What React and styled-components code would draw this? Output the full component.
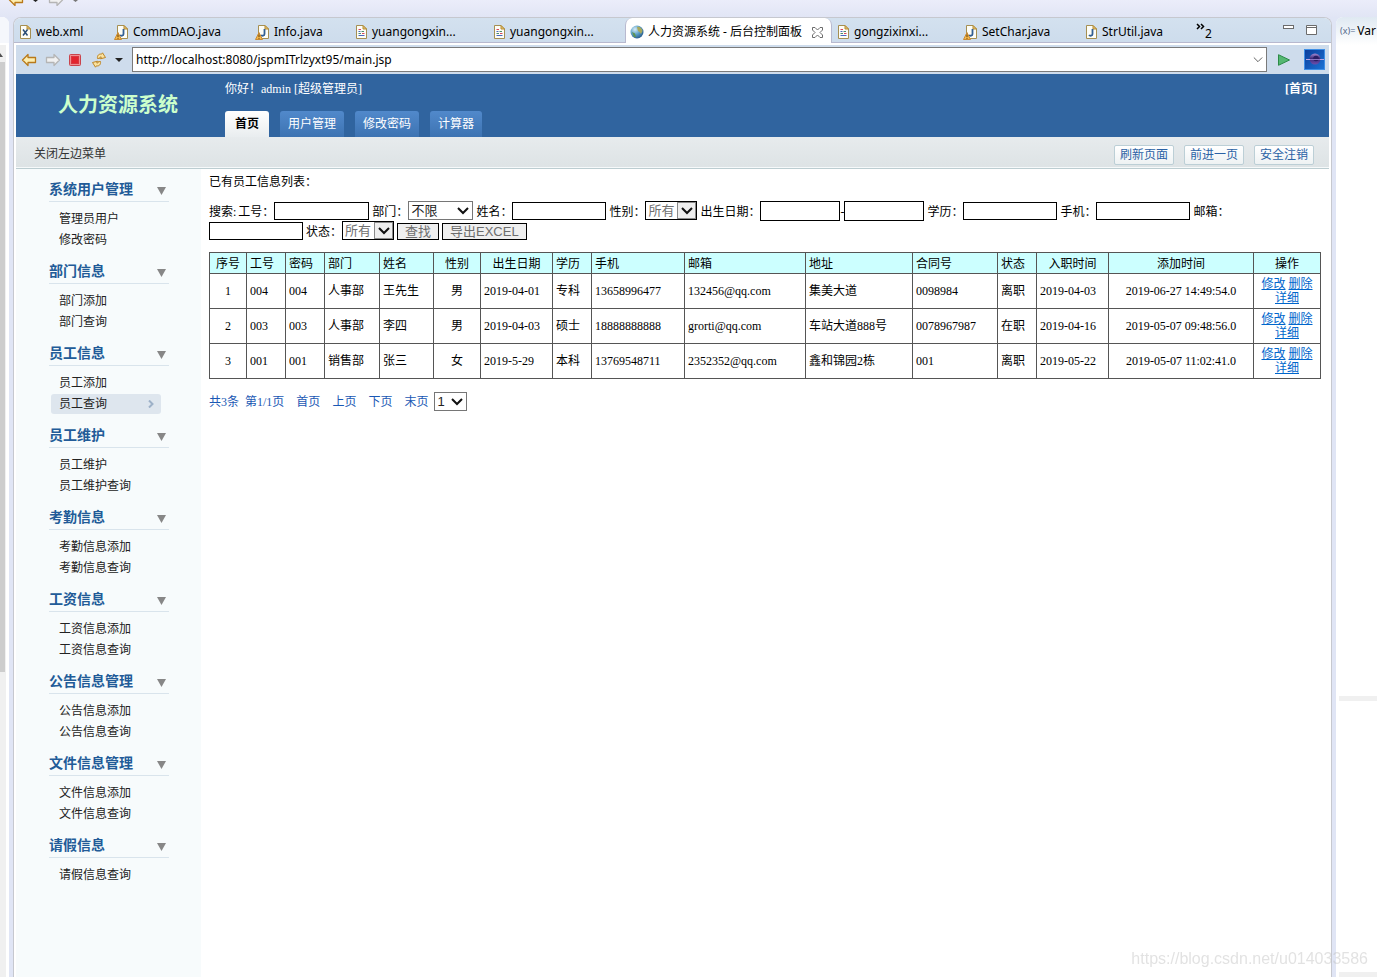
import React, { useState } from 'react';
import styled, { createGlobalStyle, css } from 'styled-components';

const uiFont = '"Noto Sans", "Noto Sans CJK SC", sans-serif';
const pageFont = '"Liberation Serif", "Noto Sans CJK SC", serif';
const formFont = '"Liberation Sans", "Noto Sans CJK SC", sans-serif';

const GlobalStyle = createGlobalStyle`
  *,
  *::after {
    box-sizing: border-box;
  }

  body {
    margin: 0;
    background: #e0e5f5;
    font-family: ${pageFont};
    font-size: 12px;
    color: #000;
  }

  button,
  input,
  select {
    margin: 0;
    padding: 0;
    border-radius: 0;
    font: inherit;
  }

  ul {
    margin: 0;
    padding: 0;
    list-style: none;
  }

  svg {
    display: block;
    flex: none;
  }
`;

/* ---------- workbench ---------- */

const Workbench = styled.div`
  display: flex;
  flex-direction: column;
  height: 100vh;
  overflow: hidden;
`;

const TopStrip = styled.div`
  display: flex;
  flex: none;
  align-items: flex-start;
  height: 17px;
  padding-left: 8px;
  background: linear-gradient(#ebedfa, #e1e5f5);
`;

const StripSpace = styled.span`
  width: ${({ $w }) => $w}px;
`;

const Panes = styled.div`
  display: flex;
  flex: 1;
  gap: 4px;
  min-height: 0;
`;

const LeftPane = styled.div`
  display: flex;
  flex: none;
  flex-direction: column;
  width: 9px;
  background: #fff;
  border-radius: 0 7px 0 0;
`;

const LeftTab = styled.div`
  height: 26px;
  margin-bottom: 2px;
  background: #f5f7fc;
  border-radius: 0 7px 0 0;
`;

const ScrollTrack = styled.div`
  flex: 1;
  width: 6px;
  padding-top: 8px;
  background: #f0f0f0;
`;

const ScrollThumb = styled.div`
  width: 5px;
  height: 66%;
  margin-top: 5px;
  background: #cdcdcd;
`;

const RightPane = styled.div`
  display: flex;
  flex: none;
  flex-direction: column;
  width: 41px;
  background: #fff;
  border-radius: 7px 0 0 0;
  overflow: hidden;
`;

const RightTab = styled.div`
  display: flex;
  align-items: center;
  gap: 2px;
  height: 28px;
  padding-left: 4px;
  background: linear-gradient(#dfe9f2, #fff);
  font-family: ${uiFont};
  font-size: 12px;
  line-height: 16px;
  white-space: nowrap;
`;

const VarMark = styled.span`
  color: #53688a;
  font-size: 9px;
`;

const RightBody = styled.div`
  flex: ${({ $grow }) => $grow};
  border-bottom: 5px solid #f0f0f0;
  margin-left: 3px;
`;

const Editor = styled.section`
  display: flex;
  flex: 1;
  flex-direction: column;
  min-width: 0;
  background: #fff;
  border: 1px solid #c6c8cf;
  border-bottom: 0;
  border-radius: 8px 8px 0 0;
  overflow: hidden;
`;

const TabStrip = styled.div`
  display: flex;
  flex: none;
  height: 25px;
  background: linear-gradient(#d3e1ef, #cddcec);
  font-family: ${uiFont};
  font-size: 12px;
`;

const FileTab = styled.button`
  display: flex;
  flex: 0 1 ${({ $w }) => $w}px;
  align-items: center;
  gap: 4px;
  min-width: 0;
  padding: 3px 0 0 6px;
  background: none;
  border: 0;
  border-bottom: 1px solid #b8b9cf;
  line-height: 18px;
  white-space: nowrap;

  ${({ $active }) =>
    $active &&
    css`
      padding-left: 4px;
      background: #fff;
      border: 1px solid #b8b9cf;
      border-width: 0 1px;
      border-radius: 7px 7px 0 0;
    `}
`;

const CloseBox = styled.span`
  margin-left: 6px;
`;

const StripEnd = styled.div`
  display: flex;
  flex: 1;
  justify-content: space-between;
  padding: 5px 14px 0 2px;
  border-bottom: 1px solid #b8b9cf;
`;

const MoreTabs = styled.button`
  display: flex;
  height: 18px;
  background: none;
  border: 0;

  span {
    align-self: flex-end;
    line-height: 14px;
  }
`;

const WindowButtons = styled.div`
  display: flex;
  gap: 12px;

  button {
    height: 16px;
    background: none;
    border: 0;
  }
`;

const BrowserBar = styled.div`
  display: flex;
  flex: none;
  align-items: center;
  height: 29px;
  margin: 2px 2px 0;
  padding: 0 4px 0 5px;
  background: #cedcec;
`;

const ToolButton = styled.button`
  display: flex;
  align-items: center;
  justify-content: center;
  width: ${({ $w }) => $w || 23}px;
  height: 22px;
  background: none;
  border: 0;
`;

const AddressBox = styled.div`
  display: flex;
  flex: 1;
  align-items: center;
  height: 25px;
  margin-left: 4px;
  padding-right: 3px;
  background: #fff;
  border: 1px solid #7a7a7a;

  input {
    flex: 1;
    min-width: 0;
    padding: 0 3px;
    border: 0;
    outline: 0;
    font-family: ${uiFont};
    font-size: 12px;
    line-height: 20px;
  }
`;

/* ---------- web page ---------- */

const Page = styled.div`
  display: flex;
  flex: 1;
  flex-direction: column;
  min-height: 0;
  margin: 0 2px;
`;

const Header = styled.header`
  display: flex;
  flex: none;
  height: 63px;
  background: #30649f;
  color: #fff;
`;

const SiteName = styled.h1`
  flex: none;
  width: 209px;
  margin: 0;
  padding: 17px 0 0 42px;
  color: #cfc;
  font-size: 20px;
  font-weight: 700;
  line-height: 28px;
`;

const HeaderMain = styled.div`
  display: flex;
  flex: 1;
  flex-direction: column;
  justify-content: space-between;
`;

const Greeting = styled.div`
  display: flex;
  justify-content: space-between;
  padding: 7px 12px 0 0;
  line-height: 16px;

  a {
    color: #fff;
    font-weight: 700;
    text-decoration: none;
  }
`;

const Nav = styled.nav`
  display: flex;
  gap: 11px;
`;

const NavLink = styled.a`
  height: 26px;
  padding: 0 8px;
  background: linear-gradient(#5189cb, #3d73b2);
  border-radius: 3px 3px 0 0;
  color: #fff;
  line-height: 26px;
  text-decoration: none;

  ${({ $active }) =>
    $active &&
    css`
      padding: 0 10px;
      background: linear-gradient(#fff, #e9edef);
      color: #000;
      font-weight: 700;
    `}
`;

const SubBar = styled.div`
  display: flex;
  flex: none;
  align-items: center;
  justify-content: space-between;
  height: 32px;
  padding: 2px 15px 0 18px;
  background: linear-gradient(#e7ebed, #dde3e5);
  border-bottom: 1px solid #bccdd1;
  box-shadow: inset 0 -1px #f6f9fa;
`;

const MenuToggle = styled.button`
  background: none;
  border: 0;
  color: #333;
  line-height: 20px;
`;

const SubActions = styled.div`
  display: flex;
  gap: 10px;
  padding-top: 3px;
`;

const SubAction = styled.button`
  width: 60px;
  height: 20px;
  background: linear-gradient(#fff, #eef2f3);
  border: 1px solid #bccfd6;
  border-radius: 2px;
  color: #2b62a5;
  line-height: 16px;
`;

const Body = styled.div`
  display: flex;
  flex: 1;
  min-height: 0;
`;

const Sidebar = styled.aside`
  flex: none;
  width: 185px;
  padding: 8px 32px 0 33px;
  background: #f7fbfc;
`;

const Group = styled.section`
  margin-bottom: 9px;
`;

const GroupTitle = styled.h2`
  display: flex;
  align-items: center;
  justify-content: space-between;
  height: 25px;
  margin: 0 0 7px;
  padding-right: 3px;
  border-bottom: 1px solid #d9e4ec;
  color: #225b98;
  font-size: 14px;
  line-height: 24px;

  span {
    padding-top: 2px;
  }

  svg {
    margin-top: 4px;
  }
`;

const MenuLink = styled.a`
  display: flex;
  align-items: center;
  justify-content: space-between;
  height: 20px;
  margin: 0 8px 1px 2px;
  padding: 0 7px 0 8px;
  border-radius: 3px;
  background: ${({ $active }) => ($active ? '#dee6ee' : 'none')};
  color: #222;
  line-height: 20px;
  text-decoration: none;
`;

const Main = styled.main`
  flex: 1;
  min-width: 0;
  padding: 5px 8px;
`;

const ListTitle = styled.p`
  margin: 0 0 11px;
  line-height: 16px;
`;

const SearchForm = styled.form`
  display: flex;
  flex-wrap: wrap;
  align-items: center;
  margin-bottom: 11px;

  > label,
  > span {
    height: 20px;
    line-height: 22px;
  }
`;

const Lead = styled.span`
  margin-right: 2px;
`;

const TextBox = styled.input`
  width: ${({ $w }) => $w || 94}px;
  height: ${({ $tall }) => ($tall ? 20 : 18)}px;
  margin-right: ${({ $joined }) => ($joined ? 0 : 3)}px;
  background: #fff;
  border: 1px solid #000;
`;

const SelectBox = styled.span`
  display: inline-block;
  position: relative;
  width: ${({ $w }) => $w}px;
  margin-right: 3px;

  select {
    display: block;
    width: 100%;
    height: 19px;
    padding: 0 2px;
    appearance: none;
    background: #fff;
    border: 1px solid ${({ $framed }) => ($framed ? '#000' : '#767676')};
    color: ${({ $framed }) => ($framed ? '#707070' : '#222')};
    font-family: ${formFont};
    font-size: 13px;
    line-height: 17px;
  }

  svg {
    position: absolute;
    z-index: 1;
    top: 6px;
    right: 4px;
    pointer-events: none;
  }

  &::after {
    content: ${({ $framed }) => ($framed ? "''" : 'none')};
    position: absolute;
    top: 1px;
    right: 1px;
    width: 19px;
    height: 17px;
    background: #eee;
    border: 1px solid #8a8a8a;
    pointer-events: none;
  }
`;

const FormButton = styled.button`
  height: 17px;
  margin-right: 3px;
  padding: 0 7px;
  background: #efefef;
  border: 1px solid #000;
  color: #6d6d6d;
  font-family: ${formFont};
  font-size: 13px;
  line-height: 15px;
`;

const Staff = styled.table`
  width: 100%;
  border-collapse: collapse;
  table-layout: fixed;

  th,
  td {
    padding: 3px;
    border: 1px solid #555;
    font-weight: 400;
    line-height: 14px;
    text-align: left;
    white-space: nowrap;
  }

  th {
    height: 21px;
    padding: 4px 3px 2px;
    background: #cff;
  }

  td {
    height: 35px;
  }
`;

const Head = styled.th`
  && {
    text-align: ${({ $center }) => ($center ? 'center' : 'left')};
  }
`;

const Cell = styled.td`
  && {
    text-align: ${({ $center }) => ($center ? 'center' : 'left')};
    white-space: ${({ $wrap }) => ($wrap ? 'normal' : 'nowrap')};
  }

  a {
    color: #06c;
  }
`;

const Pager = styled.div`
  display: flex;
  align-items: center;
  gap: 12px;
  margin-top: 13px;
  color: #1a58b4;
  line-height: 20px;

  a {
    color: inherit;
    text-decoration: none;
  }
`;

const Totals = styled.span`
  display: flex;
  gap: 6px;
`;

const LastLink = styled.span`
  display: flex;
  gap: 6px;
`;

const Watermark = styled.div`
  position: fixed;
  right: 9px;
  bottom: 8px;
  color: rgba(190, 190, 190, 0.45);
  font-family: ${formFont};
  font-size: 16px;
  line-height: 20px;
  pointer-events: none;
`;

/* ---------- icons ---------- */

const ArrowIcon = ({ gray, right, clipped }) => (
  <svg width="16" height={clipped ? 6 : 14} viewBox={clipped ? '0 7 16 6' : '0 0 16 14'}>
    <path
      d={
        right
          ? 'M14.5 7 9 1.5V4.5H1.5V9.5H9V12.5Z'
          : 'M1.5 7 7 1.5V4.5H14.5V9.5H7V12.5Z'
      }
      fill={gray ? '#f1f1f1' : '#fdeeb0'}
      stroke={gray ? '#b5b5b5' : '#b9791a'}
      strokeWidth="1.3"
      strokeLinejoin="round"
    />
  </svg>
);

const DownTriangle = ({ w = 8, h = 4, color = '#222' }) => (
  <svg width={w} height={h} viewBox="0 0 8 4" preserveAspectRatio="none">
    <path d="M0 0H8L4 4Z" fill={color} />
  </svg>
);

const StopIcon = () => (
  <svg width="12" height="12" viewBox="0 0 12 12">
    <rect x="0.5" y="0.5" width="11" height="11" rx="1" fill="#f08e92" stroke="#c9444c" />
    <rect x="2.5" y="2.5" width="7" height="7" fill="#e2242e" stroke="#d83640" />
  </svg>
);

const RefreshIcon = () => (
  <svg width="16" height="16" viewBox="0 0 16 16">
    <g fill="#fbe3a0" stroke="#bd8526" strokeLinejoin="round">
      <path d="M6.5 6.5C6 3.500 8 1.500 10.500 2.200L11.500 0.800 14.500 5.500 9.500 6.800 10.300 5C9.200 4.600 8.700 5.200 9 6.200Z" />
      <path d="M9.500 9.500C10 12.500 8 14.500 5.500 13.800L4.500 15.200 1.500 10.500 6.500 9.200 5.700 11C6.800 11.400 7.300 10.800 7 9.800Z" />
    </g>
  </svg>
);

const PlayIcon = () => (
  <svg width="12" height="12" viewBox="0 0 12 12">
    <path d="M0.5 0.7 11.5 6 0.5 11.3Z" fill="#55b872" stroke="#2b8a47" />
  </svg>
);

const EclipseIcon = () => (
  <svg width="21" height="21" viewBox="0 0 21 21">
    <defs>
      <linearGradient id="sky" x1="0" y1="0" x2="1" y2="1">
        <stop offset="0" stopColor="#0b3c9a" />
        <stop offset="1" stopColor="#1c74d6" />
      </linearGradient>
      <linearGradient id="moon" x1="0" y1="0" x2="0" y2="1">
        <stop offset="0" stopColor="#a58ad2" />
        <stop offset="0.45" stopColor="#3c2a7a" />
        <stop offset="1" stopColor="#6c50ae" />
      </linearGradient>
    </defs>
    <rect x="0.5" y="0.5" width="20" height="20" fill="url(#sky)" stroke="#3f8fe6" />
    <circle cx="11" cy="10" r="5.5" fill="url(#moon)" />
    <circle cx="12" cy="9.5" r="2.8" fill="#2a1d63" />
    <path d="M2 10.5H8M14 10.5H20" stroke="#b9a4e4" />
    <path d="M6 10.5H16" stroke="#8d76c4" />
  </svg>
);

const GlobeIcon = () => (
  <svg width="14" height="14" viewBox="0 0 14 14">
    <defs>
      <radialGradient id="globe" cx="0.35" cy="0.3" r="0.8">
        <stop offset="0" stopColor="#d5ecf8" />
        <stop offset="0.5" stopColor="#5b9fc6" />
        <stop offset="1" stopColor="#1d4f83" />
      </radialGradient>
    </defs>
    <circle cx="7" cy="7" r="6.5" fill="url(#globe)" />
    <path d="M7 2C9 1 12 3 12.5 6L11 9 9.5 7 8 6Z" fill="#a9a95a" />
    <path d="M2 7 5 8.5 6 12 4 12Z" fill="#5d9352" />
  </svg>
);

// files with a warning get extra room on the left for the badge
const PaperIcon = ({ kind, warn }) => (
  <svg width={warn ? 15 : 12} height="16" viewBox={warn ? '0 0 15 16' : '3 0 12 16'}>
    <path d="M3.5 1.5H10L13.5 5V14.5H3.5Z" fill="#fdfdf6" stroke="#a58f52" />
    <path d="M10 1.5V5H13.5Z" fill="#e8c777" stroke="#b58c35" />
    {kind === 'java' && (
      <path d="M9.5 5V10C9.5 12 7 12.2 6 11" fill="none" stroke="#315f95" strokeWidth="1.8" />
    )}
    {kind === 'xml' && (
      <path d="M6 5.5 10.5 11.5M10.5 5.5 6 11.5" stroke="#2a4e78" strokeWidth="1.5" />
    )}
    {kind === 'jsp' && (
      <g strokeWidth="1">
        <path d="M5.5 5.5H8M9 9.5H11.5" stroke="#d8475b" />
        <path d="M5.5 9.5H8M8.5 7.5H11" stroke="#4b8a70" />
        <path d="M5.5 11.5H11.5M5.5 7.5H7.500" stroke="#4767c0" />
      </g>
    )}
    {warn && (
      <g>
        <path d="M4 8.5 7.5 15.5H0.5Z" fill="#f5b94a" stroke="#c98a35" strokeLinejoin="round" />
        <path d="M4 10.5V13M4 13.8V14.8" stroke="#5a3500" />
      </g>
    )}
  </svg>
);

const CloseIcon = () => (
  <svg width="11" height="11" viewBox="0 0 11 11">
    <path
      d="M0.5 0.5H3L5.5 3 8 0.5H10.5V3L8 5.5 10.5 8V10.5H8L5.5 8 3 10.5H0.5V8L3 5.5 0.5 3Z"
      fill="#fff"
      stroke="#6c6c6c"
    />
  </svg>
);

const MoreIcon = () => (
  <svg width="9" height="8" viewBox="0 0 9 8">
    <path d="M1 1 3.5 3.5 1 6M5 1 7.5 3.5 5 6" fill="none" stroke="#000" strokeWidth="1.5" />
  </svg>
);

const Chevron = ({ w = 12, color = '#111', thick = 2 }) => (
  <svg width={w} height="8" viewBox="0 0 12 8">
    <path d="M1 1 6 6 11 1" fill="none" stroke={color} strokeWidth={thick} />
  </svg>
);

/* ---------- data ---------- */

const files = [
  { name: 'web.xml', kind: 'xml', w: 94 },
  { name: 'CommDAO.java', kind: 'java', warn: true, w: 141 },
  { name: 'Info.java', kind: 'java', warn: true, w: 101 },
  { name: 'yuangongxin...', kind: 'jsp', w: 138 },
  { name: 'yuangongxin...', kind: 'jsp', w: 137 },
  { name: '人力资源系统 - 后台控制面板', kind: 'web', w: 207 },
  { name: 'gongzixinxi...', kind: 'jsp', w: 125 },
  { name: 'SetChar.java', kind: 'java', warn: true, w: 123 },
  { name: 'StrUtil.java', kind: 'java', w: 114 },
];

const menu = [
  ['系统用户管理', ['管理员用户', '修改密码']],
  ['部门信息', ['部门添加', '部门查询']],
  ['员工信息', ['员工添加', '员工查询']],
  ['员工维护', ['员工维护', '员工维护查询']],
  ['考勤信息', ['考勤信息添加', '考勤信息查询']],
  ['工资信息', ['工资信息添加', '工资信息查询']],
  ['公告信息管理', ['公告信息添加', '公告信息查询']],
  ['文件信息管理', ['文件信息添加', '文件信息查询']],
  ['请假信息', ['请假信息查询']],
];

const columns = [
  { title: '序号', w: 37, center: true, mid: true },
  { title: '工号', w: 39 },
  { title: '密码', w: 39 },
  { title: '部门', w: 55 },
  { title: '姓名', w: 54 },
  { title: '性别', w: 47, center: true, mid: true },
  { title: '出生日期', w: 72, center: true },
  { title: '学历', w: 39 },
  { title: '手机', w: 93 },
  { title: '邮箱', w: 121 },
  { title: '地址', w: 107 },
  { title: '合同号', w: 85 },
  { title: '状态', w: 39 },
  { title: '入职时间', w: 72, center: true },
  { title: '添加时间', w: 145, center: true, mid: true },
  { title: '操作', w: 67, center: true, mid: true },
];

const staff = [
  ['1', '004', '004', '人事部', '王先生', '男', '2019-04-01', '专科', '13658996477', '132456@qq.com', '集美大道', '0098984', '离职', '2019-04-03', '2019-06-27 14:49:54.0'],
  ['2', '003', '003', '人事部', '李四', '男', '2019-04-03', '硕士', '18888888888', 'grorti@qq.com', '车站大道888号', '0078967987', '在职', '2019-04-16', '2019-05-07 09:48:56.0'],
  ['3', '001', '001', '销售部', '张三', '女', '2019-5-29', '本科', '13769548711', '2352352@qq.com', '鑫和锦园2栋', '001', '离职', '2019-05-22', '2019-05-07 11:02:41.0'],
];

/* ---------- parts ---------- */

const Select = ({ id, w, framed, options, label }) => (
  <SelectBox $w={w} $framed={framed}>
    <select id={id} aria-label={label}>
      {options.map((o) => (
        <option key={o}>{o}</option>
      ))}
    </select>
    <Chevron />
  </SelectBox>
);

const Search = () => (
  <SearchForm onSubmit={(e) => e.preventDefault()}>
    <Lead>搜索:</Lead>
    <label htmlFor="gonghao">工号：</label>
    <TextBox id="gonghao" $w={95} />
    <label htmlFor="bumen">部门：</label>
    <Select id="bumen" w={65} options={['不限', '人事部', '销售部']} />
    <label htmlFor="xingming">姓名：</label>
    <TextBox id="xingming" />
    <label htmlFor="xingbie">性别：</label>
    <Select id="xingbie" w={52} framed options={['所有', '男', '女']} />
    <label htmlFor="birth1">出生日期：</label>
    <TextBox id="birth1" $w={80} $tall $joined />
    <span>-</span>
    <TextBox id="birth2" aria-label="出生日期止" $w={80} $tall />
    <label htmlFor="xueli">学历：</label>
    <TextBox id="xueli" />
    <label htmlFor="shouji">手机：</label>
    <TextBox id="shouji" />
    <label htmlFor="youxiang">邮箱：</label>
    <TextBox id="youxiang" />
    <label htmlFor="zhuangtai">状态：</label>
    <Select id="zhuangtai" w={52} framed options={['所有', '在职', '离职']} />
    <FormButton type="submit">查找</FormButton>
    <FormButton type="button">导出EXCEL</FormButton>
  </SearchForm>
);

const StaffTable = () => (
  <Staff>
    <colgroup>
      {columns.map((c) => (
        <col key={c.title} width={c.w} />
      ))}
    </colgroup>
    <thead>
      <tr>
        {columns.map((c) => (
          <Head key={c.title} $center={c.center}>
            {c.title}
          </Head>
        ))}
      </tr>
    </thead>
    <tbody>
      {staff.map((row) => (
        <tr key={row[0]}>
          {row.map((value, i) => (
            <Cell key={columns[i].title} $center={columns[i].mid}>
              {value}
            </Cell>
          ))}
          <Cell $center $wrap>
            <a href="#edit">修改</a> <a href="#delete">删除</a> <a href="#detail">详细</a>
          </Cell>
        </tr>
      ))}
    </tbody>
  </Staff>
);

const WebPage = () => {
  const [showMenu, setShowMenu] = useState(true);

  return (
    <Page>
      <Header>
        <SiteName>人力资源系统</SiteName>
        <HeaderMain>
          <Greeting>
            <span>你好！admin [超级管理员]</span>
            <a href="#home">[首页]</a>
          </Greeting>
          <Nav>
            <NavLink href="#home" $active>
              首页
            </NavLink>
            <NavLink href="#users">用户管理</NavLink>
            <NavLink href="#password">修改密码</NavLink>
            <NavLink href="#calc">计算器</NavLink>
          </Nav>
        </HeaderMain>
      </Header>
      <SubBar>
        <MenuToggle onClick={() => setShowMenu(!showMenu)}>关闭左边菜单</MenuToggle>
        <SubActions>
          <SubAction>刷新页面</SubAction>
          <SubAction>前进一页</SubAction>
          <SubAction>安全注销</SubAction>
        </SubActions>
      </SubBar>
      <Body>
        {showMenu && (
          <Sidebar>
            {menu.map(([title, items]) => (
              <Group key={title}>
                <GroupTitle>
                  <span>{title}</span>
                  <DownTriangle w={9} h={8} color="#878787" />
                </GroupTitle>
                <ul>
                  {items.map((item) => (
                    <li key={item}>
                      <MenuLink href="#menu" $active={item === '员工查询'}>
                        {item}
                        {item === '员工查询' && (
                          <svg width="6" height="8" viewBox="0 0 6 8">
                            <path d="M1 0.5 4.5 4 1 7.5" fill="none" stroke="#9db1c8" strokeWidth="2" />
                          </svg>
                        )}
                      </MenuLink>
                    </li>
                  ))}
                </ul>
              </Group>
            ))}
          </Sidebar>
        )}
        <Main>
          <ListTitle>已有员工信息列表：</ListTitle>
          <Search />
          <StaffTable />
          <Pager>
            <Totals>
              <span>共3条</span>
              <span>第1/1页</span>
            </Totals>
            <a href="#first">首页</a>
            <a href="#prev">上页</a>
            <a href="#next">下页</a>
            <LastLink>
              <a href="#last">末页</a>
              <Select label="页码" w={33} options={['1']} />
            </LastLink>
          </Pager>
        </Main>
      </Body>
    </Page>
  );
};

const App = () => {
  const [url, setUrl] = useState('http://localhost:8080/jspmITrlzyxt95/main.jsp');

  return (
    <>
      <GlobalStyle />
      <Workbench>
        <TopStrip>
          <ArrowIcon clipped />
          <StripSpace $w={9} />
          <DownTriangle w={5} h={2} />
          <StripSpace $w={10} />
          <ArrowIcon clipped gray right />
          <StripSpace $w={9} />
          <DownTriangle w={5} h={2} color="#777" />
        </TopStrip>
        <Panes>
          <LeftPane>
            <LeftTab />
            <ScrollTrack>
              <svg width="3" height="4" viewBox="0 0 3 4">
                <path d="M0 0 3 4H0Z" fill="#505050" />
              </svg>
              <ScrollThumb />
            </ScrollTrack>
          </LeftPane>
          <Editor>
            <TabStrip>
              {files.map((f, i) => (
                <FileTab key={i} $w={f.w} $active={f.kind === 'web'}>
                  {f.kind === 'web' ? <GlobeIcon /> : <PaperIcon kind={f.kind} warn={f.warn} />}
                  {f.name}
                  {f.kind === 'web' && (
                    <CloseBox>
                      <CloseIcon />
                    </CloseBox>
                  )}
                </FileTab>
              ))}
              <StripEnd>
                <MoreTabs aria-label="更多标签">
                  <MoreIcon />
                  <span>2</span>
                </MoreTabs>
                <WindowButtons>
                  <button aria-label="最小化">
                    <svg width="11" height="16" viewBox="0 0 11 16">
                      <rect x="0.5" y="2.5" width="10" height="3" fill="#fff" stroke="#6b6b6b" />
                    </svg>
                  </button>
                  <button aria-label="最大化">
                    <svg width="11" height="16" viewBox="0 0 11 16">
                      <path d="M0.5 2.5H10.5V11.5H0.5ZM0.5 4.5H10.5" fill="#fff" stroke="#6b6b6b" />
                    </svg>
                  </button>
                </WindowButtons>
              </StripEnd>
            </TabStrip>
            <BrowserBar>
              <ToolButton $w={16} aria-label="后退">
                <ArrowIcon />
              </ToolButton>
              <ToolButton $w={31} aria-label="前进">
                <ArrowIcon gray right />
              </ToolButton>
              <ToolButton $w={14} aria-label="停止">
                <StopIcon />
              </ToolButton>
              <ToolButton $w={33} aria-label="刷新">
                <RefreshIcon />
              </ToolButton>
              <ToolButton $w={8} aria-label="历史">
                <DownTriangle />
              </ToolButton>
              <StripSpace $w={5} />
              <AddressBox>
                <input aria-label="地址" value={url} onChange={(e) => setUrl(e.target.value)} />
                <Chevron w={10} color="#444" thick={1} />
              </AddressBox>
              <ToolButton $w={33} aria-label="转到">
                <PlayIcon />
              </ToolButton>
              <StripSpace $w={4} />
              <EclipseIcon />
            </BrowserBar>
            <WebPage />
          </Editor>
          <RightPane>
            <RightTab>
              <VarMark>(x)=</VarMark>
              Var
            </RightTab>
            <RightBody $grow={658} />
            <RightBody $grow={274} />
          </RightPane>
        </Panes>
        <Watermark>https://blog.csdn.net/u014033586</Watermark>
      </Workbench>
    </>
  );
};

export default App;
